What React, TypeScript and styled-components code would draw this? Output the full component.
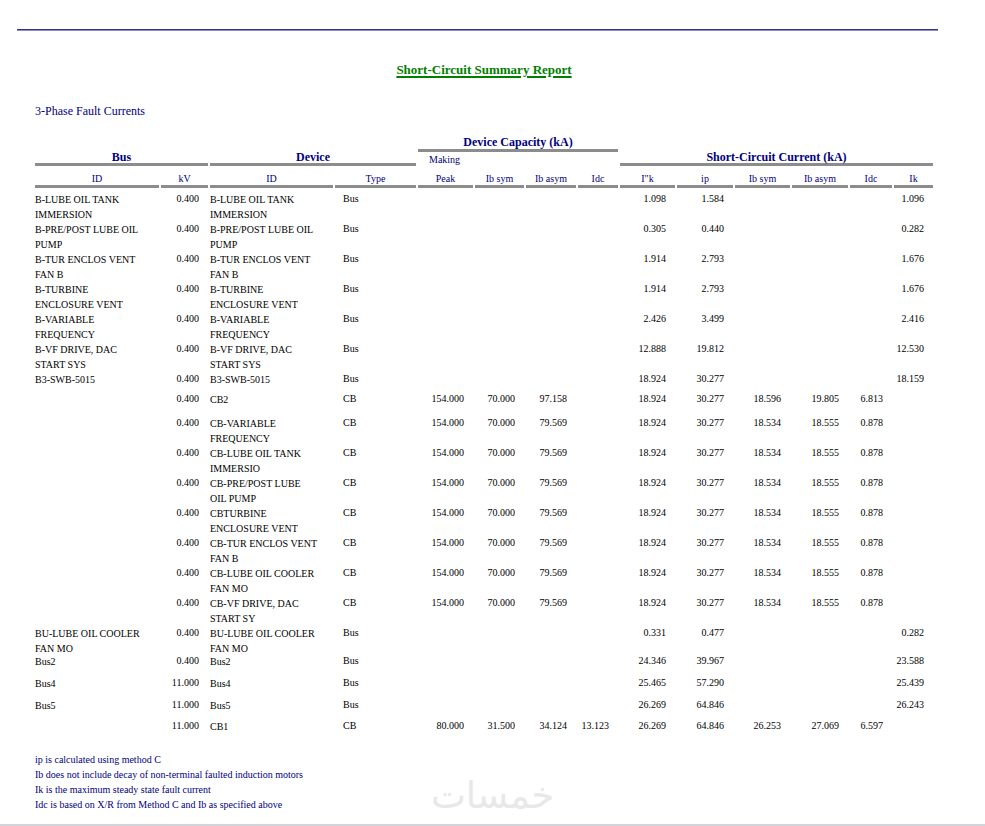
import React from 'react';
import styled, { createGlobalStyle } from 'styled-components';

const NAVY = '#000080';
const RULE = '#8c8c8c';
const COLS =
  '124px 47px 123px 81px 55px 49px 50px 40px 55px 56px 55px 56px 42px 39px';

type Row = {
  bus?: string[];
  kv: string;
  dev: string[];
  type: string;
  cap?: string[];
  sc: string[];
  h: number;
};

const CB_CAP = ['154.000', '70.000', '79.569', ''];
const CB_SC = ['18.924', '30.277', '18.534', '18.555', '0.878', ''];

const rows: Row[] = [
  { bus: ['B-LUBE OIL TANK', 'IMMERSION'], kv: '0.400', dev: ['B-LUBE OIL TANK', 'IMMERSION'], type: 'Bus', sc: ['1.098', '1.584', '', '', '', '1.096'], h: 30 },
  { bus: ['B-PRE/POST LUBE OIL', 'PUMP'], kv: '0.400', dev: ['B-PRE/POST LUBE OIL', 'PUMP'], type: 'Bus', sc: ['0.305', '0.440', '', '', '', '0.282'], h: 30 },
  { bus: ['B-TUR ENCLOS VENT', 'FAN B'], kv: '0.400', dev: ['B-TUR ENCLOS VENT', 'FAN B'], type: 'Bus', sc: ['1.914', '2.793', '', '', '', '1.676'], h: 30 },
  { bus: ['B-TURBINE', 'ENCLOSURE VENT'], kv: '0.400', dev: ['B-TURBINE', 'ENCLOSURE VENT'], type: 'Bus', sc: ['1.914', '2.793', '', '', '', '1.676'], h: 30 },
  { bus: ['B-VARIABLE', 'FREQUENCY'], kv: '0.400', dev: ['B-VARIABLE', 'FREQUENCY'], type: 'Bus', sc: ['2.426', '3.499', '', '', '', '2.416'], h: 30 },
  { bus: ['B-VF DRIVE, DAC', 'START SYS'], kv: '0.400', dev: ['B-VF DRIVE, DAC', 'START SYS'], type: 'Bus', sc: ['12.888', '19.812', '', '', '', '12.530'], h: 30 },
  { bus: ['B3-SWB-5015'], kv: '0.400', dev: ['B3-SWB-5015'], type: 'Bus', sc: ['18.924', '30.277', '', '', '', '18.159'], h: 20 },
  { kv: '0.400', dev: ['CB2'], type: 'CB', cap: ['154.000', '70.000', '97.158', ''], sc: ['18.924', '30.277', '18.596', '19.805', '6.813', ''], h: 24 },
  { kv: '0.400', dev: ['CB-VARIABLE', 'FREQUENCY'], type: 'CB', cap: CB_CAP, sc: CB_SC, h: 30 },
  { kv: '0.400', dev: ['CB-LUBE OIL TANK', 'IMMERSIO'], type: 'CB', cap: CB_CAP, sc: CB_SC, h: 30 },
  { kv: '0.400', dev: ['CB-PRE/POST LUBE', 'OIL PUMP'], type: 'CB', cap: CB_CAP, sc: CB_SC, h: 30 },
  { kv: '0.400', dev: ['CBTURBINE', 'ENCLOSURE VENT'], type: 'CB', cap: CB_CAP, sc: CB_SC, h: 30 },
  { kv: '0.400', dev: ['CB-TUR ENCLOS VENT', 'FAN B'], type: 'CB', cap: CB_CAP, sc: CB_SC, h: 30 },
  { kv: '0.400', dev: ['CB-LUBE OIL COOLER', 'FAN MO'], type: 'CB', cap: CB_CAP, sc: CB_SC, h: 30 },
  { kv: '0.400', dev: ['CB-VF DRIVE, DAC', 'START SY'], type: 'CB', cap: CB_CAP, sc: CB_SC, h: 30 },
  { bus: ['BU-LUBE OIL COOLER', 'FAN MO'], kv: '0.400', dev: ['BU-LUBE OIL COOLER', 'FAN MO'], type: 'Bus', sc: ['0.331', '0.477', '', '', '', '0.282'], h: 28 },
  { bus: ['Bus2'], kv: '0.400', dev: ['Bus2'], type: 'Bus', sc: ['24.346', '39.967', '', '', '', '23.588'], h: 22 },
  { bus: ['Bus4'], kv: '11.000', dev: ['Bus4'], type: 'Bus', sc: ['25.465', '57.290', '', '', '', '25.439'], h: 22 },
  { bus: ['Bus5'], kv: '11.000', dev: ['Bus5'], type: 'Bus', sc: ['26.269', '64.846', '', '', '', '26.243'], h: 21 },
  { kv: '11.000', dev: ['CB1'], type: 'CB', cap: ['80.000', '31.500', '34.124', '13.123'], sc: ['26.269', '64.846', '26.253', '27.069', '6.597', ''], h: 21 },
];

const subHeads = ['ID', 'kV', 'ID', 'Type', 'Peak', 'Ib sym', 'Ib asym', 'Idc', 'I"k', 'ip', 'Ib sym', 'Ib asym', 'Idc', 'Ik'];

const notes = [
  'ip is calculated using method C',
  'Ib does not include decay of non-terminal faulted induction motors',
  'Ik is the maximum steady state fault current',
  'Idc is based on X/R from Method C and Ib as specified above',
];

const App = () => {
  return (
    <>
      <GlobalStyle />
      <Page>
        <TopRule />
        <Content>
          <Title>Short-Circuit Summary Report</Title>
          <Section>3-Phase Fault Currents</Section>

          <HeadGrid>
            <GroupLabel $from={5} $to={9} $row="1" $lh={14}>
              Device Capacity (kA)
            </GroupLabel>
            <GroupLabel $from={1} $to={3} $row="1 / 3" $lh={12}>
              Bus
            </GroupLabel>
            <GroupLabel $from={3} $to={5} $row="1 / 3" $lh={12}>
              Device
            </GroupLabel>
            <Making>Making</Making>
            <GroupLabel $from={9} $to={15} $row="1 / 3" $lh={12}>
              Short-Circuit Current (kA)
            </GroupLabel>
            {subHeads.map((label, i) => (
              <SubHead key={i} style={{ gridColumn: i + 1 }}>
                {label}
              </SubHead>
            ))}
          </HeadGrid>

          <Body>
            {rows.map((row, i) => (
              <DataRow key={i} $h={row.h}>
                <IdCell>
                  {row.bus?.map((line) => (
                    <div key={line}>{line}</div>
                  ))}
                </IdCell>
                <NumCell>{row.kv}</NumCell>
                <IdCell>
                  {row.dev.map((line) => (
                    <div key={line}>{line}</div>
                  ))}
                </IdCell>
                <TypeCell>{row.type}</TypeCell>
                {(row.cap ?? ['', '', '', '']).map((v, j) => (
                  <NumCell key={`c${j}`}>{v}</NumCell>
                ))}
                {row.sc.map((v, j) => (
                  <NumCell key={`s${j}`}>{v}</NumCell>
                ))}
              </DataRow>
            ))}
          </Body>

          <Notes>
            {notes.map((n) => (
              <Note key={n}>{n}</Note>
            ))}
          </Notes>
        </Content>
        <Watermark>خمسات</Watermark>
      </Page>
    </>
  );
};

export default App;

const GlobalStyle = createGlobalStyle`
  html, body {
    margin: 0;
    padding: 0;
    background: #ffffff;
  }
  body {
    font-family: "Liberation Serif", "Times New Roman", serif;
    color: #000;
  }
`;

const Page = styled.div`
  position: relative;
  width: 985px;
  height: 826px;
  box-sizing: border-box;
  padding-top: 29px;
  border-bottom: 2px solid #d2d3dd;
  overflow: hidden;
`;

const TopRule = styled.div`
  margin-left: 17px;
  width: 921px;
  height: 1px;
  background: #34348e;
  border-bottom: 1px solid #8c8cc8;
`;

const Content = styled.div`
  margin-left: 35px;
  width: 898px;
`;

const Title = styled.div`
  margin-top: 31px;
  text-align: center;
  font-size: 13px;
  line-height: 16px;
  font-weight: bold;
  color: #008000;
  text-decoration: underline;
  text-decoration-thickness: 2px;
  text-underline-offset: 2px;
`;

const Section = styled.div`
  margin-top: 26px;
  font-size: 12px;
  line-height: 14px;
  color: ${NAVY};
`;

const HeadGrid = styled.div`
  margin-top: 17px;
  display: grid;
  grid-template-columns: ${COLS};
  grid-template-rows: 17px 14px 22px;
  column-gap: 2px;
  color: ${NAVY};
`;

const GroupLabel = styled.div<{ $from: number; $to: number; $row: string; $lh: number }>`
  grid-column: ${(p) => p.$from} / ${(p) => p.$to};
  grid-row: ${(p) => p.$row};
  align-self: end;
  text-align: center;
  font-size: 12px;
  line-height: ${(p) => p.$lh}px;
  font-weight: bold;
  white-space: nowrap;
  border-bottom: 3px solid ${RULE};
`;

const Making = styled.div`
  grid-column: 5;
  grid-row: 2;
  padding-left: 11px;
  font-size: 10px;
  line-height: 15px;
  white-space: nowrap;
`;

const SubHead = styled.div`
  grid-row: 3;
  padding-top: 7px;
  text-align: center;
  font-size: 10px;
  line-height: 12px;
  white-space: nowrap;
  border-bottom: 3px solid ${RULE};
`;

const Body = styled.div`
  margin-top: 2px;
`;

const DataRow = styled.div<{ $h: number }>`
  display: grid;
  grid-template-columns: ${COLS};
  column-gap: 2px;
  height: ${(p) => p.$h}px;
  font-size: 10px;
  line-height: 15px;
  align-items: start;
`;

const IdCell = styled.div`
  padding-top: 2px;
  white-space: nowrap;
`;

const NumCell = styled.div`
  text-align: right;
  padding-right: 9px;
  padding-top: 1px;
  white-space: nowrap;
`;

const TypeCell = styled.div`
  padding-left: 8px;
  padding-top: 1px;
`;

const Notes = styled.div`
  margin-top: 14px;
  color: ${NAVY};
  font-size: 10px;
  line-height: 15px;
`;

const Note = styled.div``;

const Watermark = styled.div`
  position: absolute;
  left: 431px;
  top: 774px;
  font-family: "DejaVu Sans", sans-serif;
  font-size: 37px;
  line-height: 44px;
  color: #e8e8e8;
  pointer-events: none;
`;
